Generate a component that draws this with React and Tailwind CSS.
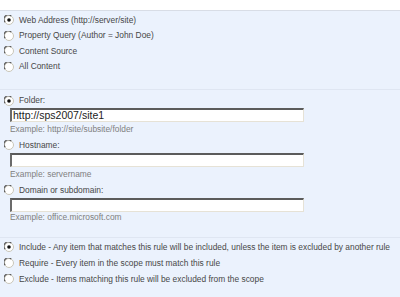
function Radio({ checked }) {
  return (
    <svg width="10" height="10" viewBox="0 0 10 10" className="shrink-0">
      <circle cx="5" cy="5" r="4.5" fill="#fff" stroke="#c9c5b8" />
      <path d="M1.2 7.2A4.2 4.2 0 0 1 7.2 1.2" fill="none" stroke="#5a5a5a" strokeWidth="1.2" />
      {checked && <circle cx="5" cy="5" r="1.8" fill="#111" />}
    </svg>
  );
}

function Option({ checked, label, h = "h-[15.5px]" }) {
  return (
    <div className={`flex items-center gap-[5px] pl-[4px] whitespace-nowrap ${h}`}>
      <Radio checked={checked} />
      <span>{label}</span>
    </div>
  );
}

function Field({ value }) {
  return (
    <div className="ml-[10px] w-[294px] h-[14px] bg-white border-t-2 border-l-2 border-t-[#5b5b5b] border-l-[#6b6b6b] border-b border-r border-b-[#e6e2d6] border-r-[#e6e2d6] flex items-center pl-[1px] text-[10.5px] text-[#222] leading-none">
      {value}
    </div>
  );
}

function Example({ text, h }) {
  return <div className={`pl-[10px] text-[#808080] flex items-center ${h}`}>{text}</div>;
}

export default function App() {
  return (
    <div
      className="w-[400px] h-[297px] bg-[#ebf2fd] text-[8.4px] text-[#474747] overflow-hidden"
      style={{ fontFamily: '"Liberation Sans", Arial, sans-serif' }}
    >
      <div className="h-[11px] bg-white border-b border-[#d8dde6]" />

      {/* scope target */}
      <div className="pt-[1.5px] h-[79px] border-b border-[#dfe6f2]">
        <Option checked label="Web Address (http://server/site)" />
        <Option label="Property Query (Author = John Doe)" />
        <Option label="Content Source" />
        <Option label="All Content" />
      </div>

      {/* address */}
      <div className="pt-[3px] h-[148px] border-b border-[#dfe6f2]">
        <Option checked label="Folder:" h="h-[15px]" />
        <Field value="http://sps2007/site1" />
        <Example text="Example: http://site/subsite/folder" h="h-[15px]" />
        <Option label="Hostname:" h="h-[16px]" />
        <Field />
        <Example text="Example: servername" h="h-[15px]" />
        <Option label="Domain or subdomain:" h="h-[16px]" />
        <Field />
        <Example text="Example: office.microsoft.com" h="h-[10px]" />
      </div>

      {/* behavior */}
      <div className="pt-[1px]">
        <Option checked label="Include - Any item that matches this rule will be included, unless the item is excluded by another rule" h="h-[16px]" />
        <Option label="Require - Every item in the scope must match this rule" h="h-[16px]" />
        <Option label="Exclude - Items matching this rule will be excluded from the scope" h="h-[16px]" />
      </div>
    </div>
  );
}
